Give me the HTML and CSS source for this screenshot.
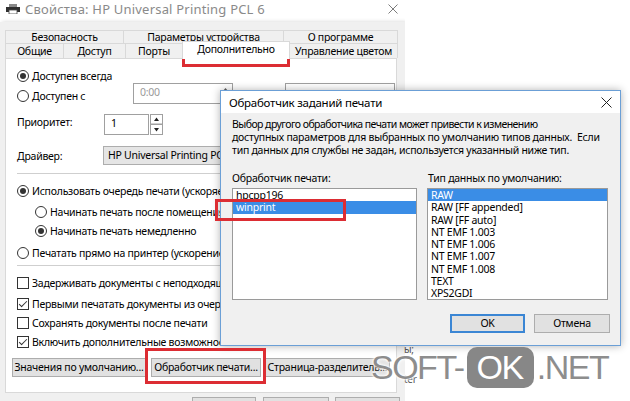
FILE: index.html
```html
<!DOCTYPE html>
<html lang="ru">
  <head>
    <meta charset="UTF-8" />
    <title>Свойства: HP Universal Printing PCL 6</title>
    <link rel="stylesheet" href="styles.css">
  </head>
  <body>
    <div class="desk">
      <div class="main">
        <div class="titlebar">
          <svg class="app-icon" viewBox="0 0 14 10">
            <rect x="3" y="0" width="8" height="3" fill="#8a8a8a" />
            <rect x="0" y="3" width="14" height="5" fill="#2f2f2f" />
            <rect x="3" y="6" width="8" height="4" fill="#fff" stroke="#4a4a4a" stroke-width="0.8" />
          </svg>
          <span class="title">Свойства: HP Universal Printing PCL 6</span>
          <svg class="close-main" viewBox="0 0 10 10">
            <path d="M0.5 0.5 L9.5 9.5 M9.5 0.5 L0.5 9.5" stroke="#7c7c7c" stroke-width="1" />
          </svg>
        </div>

        <div class="main-body">
          <div class="tabs">
            <div class="tab-row top">
              <div class="tab" style="width:119px">Безопасность</div>
              <div class="tab" style="width:161px">Параметры устройства</div>
              <div class="tab" style="width:115px">О программе</div>
            </div>
            <div class="tab-row bottom">
              <div class="tab" style="width:59px">Общие</div>
              <div class="tab" style="width:63px">Доступ</div>
              <div class="tab" style="width:58px">Порты</div>
              <div class="tab sel" style="width:108px">Дополнительно</div>
              <div class="tab" style="width:109px">Управление цветом</div>
            </div>
          </div>

          <div class="panel">
            <div class="opt first"><span class="radio on"></span>Доступен всегда</div>

            <div class="line time-row">
              <div class="radio-part"><span class="radio"></span>Доступен с</div>
              <div class="field time">
                <span class="muted">0:00</span>
                <svg class="spin-in" viewBox="0 0 13 19">
                  <path d="M4 7 L6.5 4 L9 7 Z M4 12 L6.5 15 L9 12 Z" fill="#606060" />
                </svg>
              </div>
              <div class="field time2"></div>
            </div>

            <div class="line prio-row">
              <div class="lbl-prio">Приоритет:</div>
              <div class="field prio">1</div>
              <svg class="spinner" viewBox="0 0 13 21">
                <rect x="0.5" y="0.5" width="12" height="9.5" fill="#fff" stroke="#a0a0a0" />
                <rect x="0.5" y="10.5" width="12" height="10" fill="#fff" stroke="#a0a0a0" />
                <path d="M4 7 L6.5 3.5 L9 7 Z M4 14 L6.5 17.5 L9 14 Z" fill="#222" />
              </svg>
            </div>

            <div class="line drv-row">
              <div class="lbl-drv">Драйвер:</div>
              <div class="select">HP Universal Printing PCL 6</div>
            </div>

            <div class="sep sep1"></div>

            <div class="opt q1"><span class="radio on"></span>Использовать очередь печати (ускоряет работу печати)</div>
            <div class="opt sub q2"><span class="radio"></span>Начинать печать после помещения в очередь последней страницы</div>
            <div class="opt sub q3"><span class="radio on"></span>Начинать печать немедленно</div>
            <div class="opt q4"><span class="radio"></span>Печатать прямо на принтер (ускорение печати)</div>

            <div class="sep sep2"></div>

            <div class="opt c1"><span class="cb"></span>Задерживать документы с неподходящими параметрами</div>
            <div class="opt c2"><span class="cb on"></span>Первыми печатать документы из очереди</div>
            <div class="opt c3"><span class="cb"></span>Сохранять документы после печати</div>
            <div class="opt c3"><span class="cb on"></span>Включить дополнительные возможности печати</div>

            <div class="panel-buttons">
              <div class="btn w-def">Значения по умолчанию...</div>
              <div class="btn w-proc">Обработчик печати...</div>
              <div class="btn w-sep">Страница-разделитель...</div>
            </div>
          </div>

          <div class="main-buttons">
            <div class="btn w-ok">ОК</div>
            <div class="btn w-cancel">Отмена</div>
            <div class="btn w-apply">Применить</div>
          </div>
        </div>
      </div>

      <span class="stray s1">ы;</span>
      <span class="stray s2">ter</span>

      <div class="dlg">
        <div class="dlg-title">
          <span>Обработчик заданий печати</span>
          <svg class="close-dlg" viewBox="0 0 11 11">
            <path d="M0.5 0.5 L10.5 10.5 M10.5 0.5 L0.5 10.5" stroke="#222" stroke-width="1" />
          </svg>
        </div>
        <div class="dlg-body">
          <p class="desc">
            <span class="tight">Выбор другого обработчика печати может привести к изменению</span><br />
            доступных параметров для выбранных по умолчанию типов данных.&nbsp; Если<br />
            тип данных для службы не задан, используется указанный ниже тип.
          </p>
          <div class="cols">
            <div class="col col-left">
              <div class="lbl">Обработчик печати:</div>
              <ul class="list">
                <li>hpcpp196</li>
                <li class="sel">winprint</li>
              </ul>
            </div>
            <div class="col col-right">
              <div class="lbl">Тип данных по умолчанию:</div>
              <ul class="list">
                <li class="sel">RAW</li>
                <li>RAW [FF appended]</li>
                <li>RAW [FF auto]</li>
                <li>NT EMF 1.003</li>
                <li>NT EMF 1.006</li>
                <li>NT EMF 1.007</li>
                <li>NT EMF 1.008</li>
                <li>TEXT</li>
                <li>XPS2GDI</li>
              </ul>
            </div>
          </div>
          <div class="dlg-buttons">
            <div class="btn default">OK</div>
            <div class="btn">Отмена</div>
          </div>
        </div>
      </div>

      <div class="mark mark-tab"></div>
      <div class="mark mark-list"></div>
      <div class="mark mark-btn"></div>

      <div class="watermark">
        <span class="wm-text">SOFT-</span>
        <span class="wm-ok">OK</span>
        <span class="wm-text">.NET</span>
      </div>
    </div>
  </body>
</html>
```

FILE: styles.css
```css
  html,
  body {
    margin: 0;
    background-color: #fff;
    font-family: "Noto Sans", "Open Sans", sans-serif;
    font-size: 10.5px;
    letter-spacing: -0.25px;
    color: #000;
  }

  .desk {
    position: relative;
    width: 630px;
    height: 401px;
    overflow: hidden;
  }

  /* main properties window */
  .main {
    width: 405px;
    height: 401px;
    display: flex;
    flex-direction: column;
    overflow: hidden;
  }

  .titlebar {
    flex: none;
    height: 22px;
    background-color: #fff;
    display: flex;
    align-items: flex-start;
  }

  .app-icon {
    width: 14px;
    height: 10px;
    margin: 4px 5px 0 6px;
  }

  .title {
    flex: 1;
    color: #8a8a8a;
    font-size: 13px;
    letter-spacing: 0.2px;
    line-height: 18px;
  }

  .close-main {
    width: 10px;
    height: 10px;
    margin: 4px 7px 0 0;
  }

  .main-body {
    flex: none;
    background-color: #f0f0f0;
    box-shadow: 2px 0 4px rgba(0, 0, 0, 0.18);
    display: flex;
    flex-direction: column;
    height: 379px;
    overflow: hidden;
  }

  .tabs {
    flex: none;
    padding: 8px 0 0 5px;
  }

  .tab-row {
    display: flex;
  }

  .tab-row.top {
    height: 13px;
  }

  .tab-row.bottom {
    height: 15px;
  }

  .tab {
    box-sizing: border-box;
    margin-left: -1px;
    border: 1px solid #d9d9d9;
    border-bottom: none;
    text-align: center;
    line-height: 12px;
    white-space: nowrap;
  }

  .tab:first-child {
    margin-left: 0;
  }

  .tab-row.bottom .tab {
    line-height: 15px;
  }

  .tab.sel {
    position: relative;
    z-index: 1;
    margin-top: -2px;
    margin-bottom: -1px;
    background-color: #fff;
    line-height: 15px;
  }

  .panel {
    flex: none;
    box-sizing: border-box;
    height: 335px;
    margin: 0 8px 0 5px;
    padding-left: 11px;
    background-color: #fff;
    border: 1px solid #d9d9d9;
    display: flex;
    flex-direction: column;
    overflow: hidden;
    white-space: nowrap;
  }

  .panel > * {
    flex: none;
  }

  .opt {
    height: 16px;
    display: flex;
    align-items: center;
  }

  .opt.first { height: 15px; margin-top: 9px; }
  .opt.sub { padding-left: 18px; }
  .q1 { margin-top: 9px; }
  .q2 { margin-top: 5px; }
  .q3 { margin-top: 3px; }
  .q4 { margin-top: 6px; }
  .c1 { margin-top: 9px; }
  .c2 { margin-top: 5px; }
  .c3 { margin-top: 3px; }

  .radio {
    box-sizing: border-box;
    flex: none;
    width: 12px;
    height: 12px;
    margin-right: 3px;
    border: 1px solid #333;
    border-radius: 50%;
    background-color: #fff;
    display: flex;
    align-items: center;
    justify-content: center;
  }

  .radio.on::after {
    content: "";
    width: 6px;
    height: 6px;
    border-radius: 50%;
    background-color: #333;
  }

  .cb {
    box-sizing: border-box;
    position: relative;
    flex: none;
    width: 12px;
    height: 12px;
    margin-right: 3px;
    border: 1px solid #333;
    background-color: #fff;
  }

  .cb.on::after {
    content: "";
    position: absolute;
    left: 3px;
    top: 0;
    width: 3px;
    height: 7px;
    border: solid #333;
    border-width: 0 1.3px 1.3px 0;
    transform: rotate(45deg);
  }

  .line {
    display: flex;
  }

  .time-row {
    height: 21px;
    align-items: center;
  }

  .radio-part {
    width: 116px;
    display: flex;
    align-items: center;
    margin-top: 5px;
  }

  .field {
    box-sizing: border-box;
    border: 1px solid #a0a0a0;
    background-color: #fff;
    height: 21px;
    line-height: 15px;
    padding: 1px 0 0 6px;
  }

  .field.time {
    width: 100px;
    display: flex;
    justify-content: space-between;
  }

  .muted {
    color: #9a9a9a;
  }

  .spin-in {
    width: 13px;
    height: 19px;
    margin-top: -1px;
  }

  .field.time2 {
    width: 110px;
    margin-left: 52px;
  }

  .prio-row {
    height: 21px;
    margin-top: 10px;
  }

  .lbl-prio {
    width: 87px;
    line-height: 15px;
    padding-top: 1px;
  }

  .field.prio {
    width: 45px;
  }

  .spinner {
    width: 13px;
    height: 21px;
    margin-left: 1px;
  }

  .drv-row {
    height: 19px;
    margin-top: 11px;
    align-items: center;
  }

  .lbl-drv {
    width: 86px;
  }

  .select {
    box-sizing: border-box;
    width: 200px;
    height: 19px;
    line-height: 17px;
    padding-left: 4px;
    background-color: #e5e5e5;
    border: 1px solid #adadad;
  }

  .sep {
    height: 1px;
    width: 300px;
    background-color: #cfcfcf;
  }

  .sep1 { margin-top: 8px; }
  .sep2 { margin-top: 4px; }

  .btn {
    box-sizing: border-box;
    flex: none;
    height: 19px;
    line-height: 17px;
    text-align: center;
    background-color: #e1e1e1;
    border: 1px solid #adadad;
    white-space: nowrap;
    overflow: hidden;
  }

  .panel-buttons {
    display: flex;
    margin: 8px 0 0 -5px;
  }

  .w-def { width: 134px; }
  .w-proc { width: 110px; margin-left: 5px; }
  .w-sep { width: 125px; margin-left: 4px; }

  .main-buttons {
    flex: none;
    display: flex;
    justify-content: flex-end;
    padding: 4px 5px 0 0;
  }

  .main-buttons .btn {
    height: 22px;
    line-height: 22px;
  }

  .w-ok { width: 64px; }
  .w-cancel { width: 66px; margin-left: 7px; }
  .w-apply { width: 65px; margin-left: 6px; }

  .stray {
    position: absolute;
    left: 404px;
    color: #555;
    font-size: 10px;
  }

  .s1 { top: 342px; }
  .s2 { top: 372px; }

  /* print processor dialog */
  .dlg {
    position: absolute;
    left: 220px;
    top: 90px;
    width: 399px;
    height: 254px;
    border: 1px solid #6b9fd6;
    background-color: #f0f0f0;
    box-shadow: 0 0 8px rgba(0, 0, 0, 0.3);
    display: flex;
    flex-direction: column;
  }

  .dlg-title {
    flex: none;
    height: 22px;
    background-color: #fff;
    display: flex;
    align-items: center;
    justify-content: space-between;
    padding: 0 8px 0 8px;
    font-size: 11.5px;
  }

  .close-dlg {
    width: 11px;
    height: 11px;
  }

  .dlg-body {
    flex: 1;
    padding: 5px 10px 0 11px;
  }

  .desc {
    margin: 0;
    line-height: 13px;
    white-space: nowrap;
  }

  .tight {
    letter-spacing: -0.55px;
  }

  .cols {
    display: flex;
    gap: 10px;
    margin-top: 15px;
  }

  .col-left { width: 185px; }
  .col-right { width: 181px; }

  .lbl {
    line-height: 13px;
    margin-bottom: 3px;
  }

  .col-right .lbl {
    padding-left: 1px;
  }

  .list {
    box-sizing: border-box;
    height: 112px;
    margin: 0;
    padding: 0;
    list-style: none;
    background-color: #fff;
    border: 1px solid #9a9a9a;
  }

  .list li {
    height: 12.3px;
    line-height: 12.3px;
    padding-left: 3px;
    white-space: nowrap;
  }

  .list li.sel {
    background-color: #3a8de6;
    color: #fff;
  }

  .dlg-buttons {
    display: flex;
    justify-content: flex-end;
    gap: 9px;
    margin-top: 14px;
  }

  .dlg-buttons .btn {
    width: 76px;
  }

  .dlg-buttons .btn.default {
    width: 75px;
    border: 2px solid #3b86d4;
    line-height: 15px;
  }

  /* red highlight frames */
  .mark {
    position: absolute;
    box-sizing: border-box;
    border: 3px solid #dc2d33;
  }

  .mark-tab { left: 182px; top: 43px; width: 108px; height: 24px; }
  .mark-list { left: 215px; top: 199px; width: 131px; height: 22px; }
  .mark-btn { left: 145px; top: 348px; width: 121px; height: 36px; }

  /* watermark */
  .watermark {
    position: absolute;
    left: 371px;
    top: 347px;
    height: 41px;
    display: flex;
    align-items: center;
    font-family: "Liberation Sans", Arial, sans-serif;
    font-size: 34px;
    letter-spacing: -1.5px;
    color: #8d8d8d;
  }

  .wm-text {
    text-shadow: 0 0 2px #fff, 0 0 3px #fff, 0 0 4px #fff;
  }

  .wm-ok {
    height: 41px;
    line-height: 41px;
    margin: 0 3px 0 3px;
    padding: 0 11px 0 10px;
    border-radius: 10px;
    background-color: #878787;
    color: #fff;
  }
```
